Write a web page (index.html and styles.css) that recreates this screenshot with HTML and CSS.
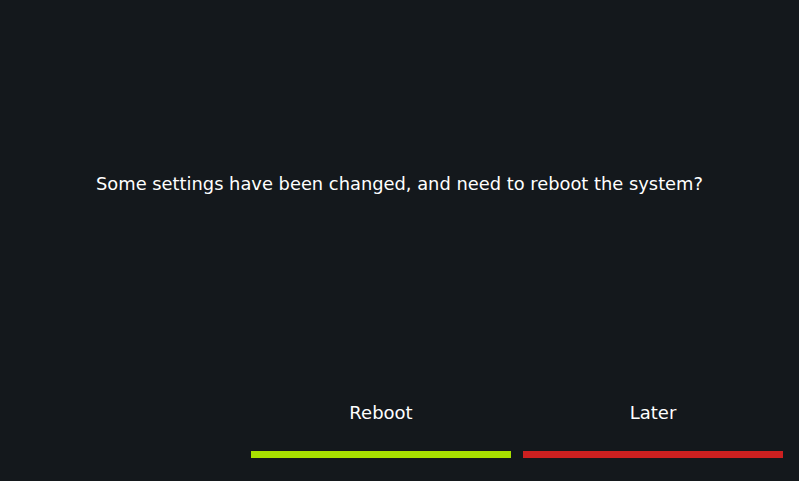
FILE: index.html
```html
<!DOCTYPE html>
<html lang="en">
<head>
    <meta charset="UTF-8">
    <title>Reboot</title>
    <link rel="stylesheet" href="styles.css">
</head>
<body>

<div class="dialog">
    <p class="message">Some settings have been changed, and need to reboot the system?</p>

    <div class="actions">
        <button type="button" class="action action-ok">Reboot</button>
        <button type="button" class="action action-cancel">Later</button>
    </div>
</div>

</body>
</html>
```

FILE: styles.css
```css
html, body {
    margin: 0;
    padding: 0;
    height: 100%;
}
body {
    font-family: 'DejaVu Sans', sans-serif;
    background-color: #14181c;
    color: #ffffff;
}
.dialog {
    height: 100%;
    display: flex;
    flex-direction: column;
}
.message {
    margin: 0;
    padding-top: 172px;
    height: 212px;
    text-align: center;
    font-size: 17.85px;
    line-height: 24px;
}
.actions {
    margin-top: auto;
    display: flex;
    justify-content: flex-end;
    gap: 12px;
    padding: 0 16px 23px 0;
}
.action {
    width: 260px;
    padding: 0 0 26px;
    background: none;
    border: none;
    border-bottom: 7px solid transparent;
    color: #ffffff;
    font-family: inherit;
    font-size: 18px;
    line-height: 24px;
    cursor: pointer;
}
.action-ok {
    border-bottom-color: #a8e000;
}
.action-cancel {
    border-bottom-color: #cc2020;
}
```
